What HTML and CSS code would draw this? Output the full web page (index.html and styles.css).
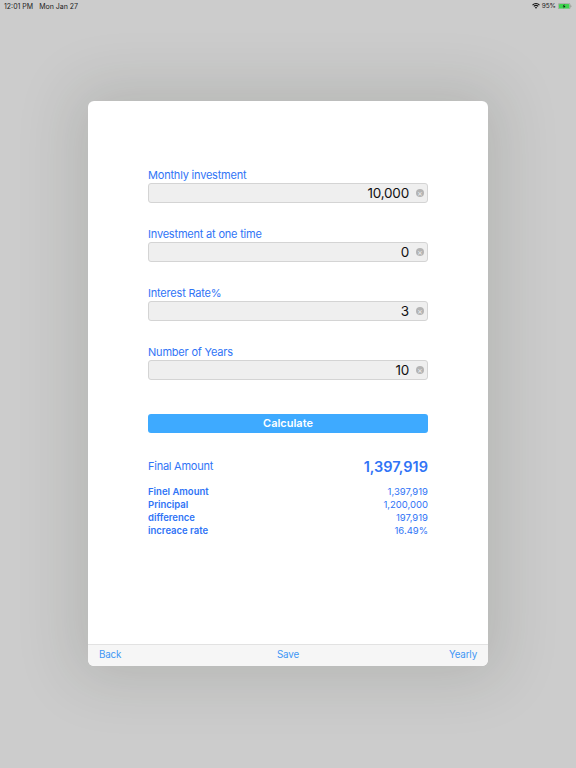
FILE: index.html
```html
<!DOCTYPE html>
<html>
  <head>
    <link rel="stylesheet" href="styles.css">
  </head>
  <body>
    <div class="statusBar">
      <div class="statusLeft">
        <span>12:01 PM</span>
        <span>Mon Jan 27</span>
      </div>
      <div class="statusRight">
        <svg class="wifiIcon" viewBox="0 0 12 9" width="8" height="6">
          <path d="M6 8.8 4.2 6.8a2.6 2.6 0 0 1 3.6 0z" fill="#111"/>
          <path d="M3.3 5.8 2.2 4.6a5.5 5.5 0 0 1 7.6 0L8.7 5.8a4 4 0 0 0-5.4 0z" fill="#111"/>
          <path d="M1.4 3.7.2 2.5a8.4 8.4 0 0 1 11.6 0l-1.2 1.2a6.7 6.7 0 0 0-9.2 0z" fill="#111"/>
        </svg>
        <span>95%</span>
        <svg class="batteryIcon" viewBox="0 0 15 7" width="14" height="6.5">
          <rect x="0.3" y="0.3" width="12.6" height="6.4" rx="1.6" fill="none" stroke="#8a8f86" stroke-width="0.6"/>
          <rect x="1" y="1" width="11.2" height="5" rx="1" fill="#3fd44f"/>
          <path d="M13.4 2.4c.7.1 1 .5 1 1.1s-.3 1-1 1.1z" fill="#8a8f86"/>
          <path d="M6.9 1.2 5 3.8h1.3L5.9 5.8 8 3.1H6.6z" fill="#111"/>
        </svg>
      </div>
    </div>

    <div class="modal">
      <div class="content">
        <div class="field">
          <label class="fieldLabel">Monthly investment</label>
          <div class="inputBox"><span>10,000</span><span class="clearBtn">×</span></div>
        </div>
        <div class="field">
          <label class="fieldLabel">Investment at one time</label>
          <div class="inputBox"><span>0</span><span class="clearBtn">×</span></div>
        </div>
        <div class="field">
          <label class="fieldLabel">Interest Rate%</label>
          <div class="inputBox"><span>3</span><span class="clearBtn">×</span></div>
        </div>
        <div class="field">
          <label class="fieldLabel">Number of Years</label>
          <div class="inputBox"><span>10</span><span class="clearBtn">×</span></div>
        </div>

        <div class="calcBtn">Calculate</div>

        <div class="finalRow">
          <span>Final Amount</span>
          <span class="finalValue">1,397,919</span>
        </div>

        <div class="details">
          <div class="detailRow"><b>Finel Amount</b><span>1,397,919</span></div>
          <div class="detailRow"><b>Principal</b><span>1,200,000</span></div>
          <div class="detailRow"><b>difference</b><span>197,919</span></div>
          <div class="detailRow"><b>increace rate</b><span>16.49%</span></div>
        </div>
      </div>

      <div class="toolbar">
        <span>Back</span>
        <span>Save</span>
        <span class="toolbarRight">Yearly</span>
      </div>
    </div>
  </body>
</html>
```

FILE: styles.css
```css
html, body {
  height: 100%;
}

body {
  margin: 0;
  height: 768px;
  overflow: hidden;
  background-color: #cccccc;
  font-family: Inter, "Liberation Sans", sans-serif;
  display: flex;
  align-items: center;
  justify-content: center;
}

.statusBar {
  position: absolute;
  top: 0;
  left: 0;
  right: 0;
  height: 12px;
  padding: 0 4px;
  display: flex;
  justify-content: space-between;
  align-items: center;
  font-size: 7px;
  color: #222;
}

.statusLeft {
  display: flex;
  gap: 6px;
}

.statusRight {
  display: flex;
  align-items: center;
  gap: 2px;
  font-size: 6.5px;
}

.modal {
  width: 400px;
  height: 565px;
  margin-top: -1px;
  background-color: #fff;
  border-radius: 6px;
  box-shadow: 0 0 60px 14px rgba(30, 40, 20, 0.13);
  display: flex;
  flex-direction: column;
  overflow: hidden;
}

.content {
  flex: 1;
  padding: 67px 60px 0;
}

.field {
  margin-bottom: 24px;
}

.fieldLabel {
  display: block;
  height: 15px;
  line-height: 15px;
  font-size: 11px;
  letter-spacing: -0.2px;
  color: #3074f6;
}

.inputBox {
  height: 20px;
  box-sizing: border-box;
  background-color: #efefef;
  border: 1px solid #d4d4d4;
  border-radius: 3px;
  padding: 0 3px 0 0;
  display: flex;
  justify-content: flex-end;
  align-items: center;
  gap: 7px;
  font-size: 13.5px;
  letter-spacing: -0.2px;
  color: #111;
}

.clearBtn {
  width: 8px;
  height: 8px;
  border-radius: 50%;
  background-color: #b4b4b4;
  color: #efefef;
  font-size: 8px;
  line-height: 8px;
  letter-spacing: 0;
  text-align: center;
}

.calcBtn {
  margin-top: 34px;
  height: 19px;
  line-height: 19px;
  background-color: #3eaaff;
  color: #fff;
  border-radius: 3px;
  text-align: center;
  font-size: 11px;
  font-weight: 600;
}

.finalRow {
  margin-top: 23px;
  height: 20px;
  display: flex;
  justify-content: space-between;
  align-items: center;
  font-size: 11px;
  letter-spacing: -0.25px;
  color: #3074f6;
}

.finalValue {
  font-size: 14.5px;
  font-weight: 600;
  letter-spacing: 0;
}

.details {
  margin-top: 9px;
  font-size: 9.5px;
  color: #3074f6;
}

.detailRow {
  height: 13px;
  line-height: 13px;
  display: flex;
  justify-content: space-between;
}

.detailRow b {
  font-weight: 600;
}

.detailRow span {
  letter-spacing: 0;
}

.toolbar {
  height: 22px;
  box-sizing: border-box;
  background-color: #f6f6f6;
  border-top: 1px solid #e2e2e2;
  padding: 0 11px 3px;
  display: grid;
  grid-template-columns: 1fr auto 1fr;
  align-items: center;
  font-size: 9.8px;
  letter-spacing: -0.15px;
  color: #3f97f5;
}

.toolbarRight {
  text-align: right;
}
```
